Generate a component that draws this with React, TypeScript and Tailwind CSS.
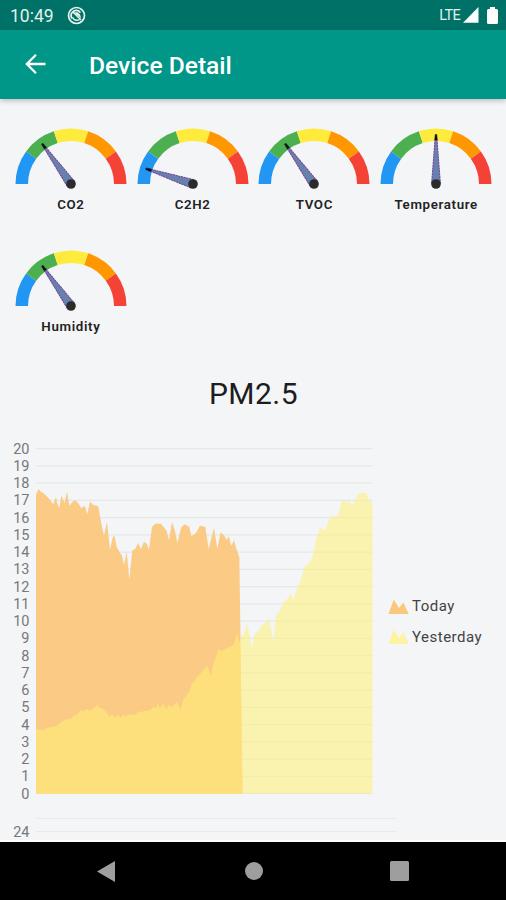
type Point = [number, number];

const STEP = 17.25;

// Chart points in thirds of a pixel; the baseline sits at y = 940.
const TODAY: Point[] = [
  [108, 42], [116, 26], [122, 34], [130, 38], [140, 48], [150, 58], [160, 72], [168, 50], [172, 70],
  [178, 84], [184, 46], [194, 68], [201, 34], [208, 76], [218, 64], [226, 60], [236, 70], [244, 84],
  [254, 76], [262, 102], [270, 64], [280, 74], [295, 78], [304, 130], [312, 166], [321, 126], [330, 208],
  [338, 172], [343, 164], [350, 200], [358, 214], [366, 226], [372, 254], [380, 214], [388, 298],
  [397, 210], [406, 206], [414, 188], [423, 206], [432, 184], [440, 190], [447, 208], [456, 140],
  [466, 130], [482, 130], [494, 144], [500, 152], [507, 180], [516, 124], [525, 152], [532, 188],
  [544, 140], [554, 132], [568, 140], [574, 168], [588, 158], [600, 136], [616, 140], [626, 206],
  [642, 142], [652, 206], [662, 156], [674, 168], [680, 180], [686, 168], [694, 196], [702, 180],
  [710, 208], [718, 230], [728, 940],
];

const YESTERDAY: Point[] = [
  [108, 748], [130, 748], [150, 740], [168, 738], [185, 724], [200, 716], [212, 716], [222, 704],
  [232, 704], [240, 690], [250, 692], [262, 686], [270, 692], [282, 682], [290, 674], [300, 682],
  [310, 686], [322, 700], [330, 710], [336, 702], [346, 710], [354, 704], [362, 712], [370, 702],
  [378, 708], [390, 700], [404, 704], [414, 696], [436, 692], [450, 690], [462, 678], [467, 684],
  [474, 670], [480, 684], [490, 670], [498, 686], [508, 672], [516, 682], [530, 664], [542, 686],
  [550, 658], [558, 648], [566, 636], [576, 610], [590, 592], [600, 580], [614, 564], [622, 556],
  [632, 586], [642, 544], [656, 506], [664, 512], [682, 502], [700, 494], [712, 460], [718, 486],
  [724, 468], [732, 462], [740, 430], [746, 450], [755, 505], [764, 460], [776, 452], [786, 434],
  [798, 426], [806, 416], [812, 440], [820, 486], [828, 404], [840, 392], [850, 366], [862, 356],
  [872, 338], [880, 360], [890, 326], [902, 300], [914, 258], [926, 250], [938, 228], [948, 178],
  [960, 142], [974, 152], [986, 120], [996, 108], [1014, 106], [1026, 60], [1040, 66], [1048, 62],
  [1058, 74], [1066, 60], [1076, 38], [1100, 38], [1106, 62], [1112, 52], [1117, 76], [1117, 940],
];

const area = (points: Point[]) =>
  `M108 940L${points.map(([x, y]) => `${x} ${y}`).join("L")}Z`;

const SEGMENTS = ["#2196f3", "#4caf50", "#ffeb3b", "#ff9800", "#f44336"];

function segmentPath(i: number) {
  const at = (deg: number, r: number) => {
    const a = (deg * Math.PI) / 180;
    return `${(60 - r * Math.cos(a)).toFixed(2)} ${(60 - r * Math.sin(a)).toFixed(2)}`;
  };
  return `M${at(i * 36, 55.5)}A55.5 55.5 0 0 1 ${at(i * 36 + 36, 55.5)}L${at(i * 36 + 36, 43)}A43 43 0 0 0 ${at(i * 36, 43)}Z`;
}

function Gauge({ label, angle }: { label: string; angle: number }) {
  return (
    <div className="flex h-[121.5px] flex-col items-center">
      <svg className="shrink-0" width="120" height="66" viewBox="0 0 120 66">
        {SEGMENTS.map((c, i) => (
          <path key={c} d={segmentPath(i)} fill={c} />
        ))}
        <g transform={`rotate(${angle - 90} 60 60)`}>
          <path d="M55.6 59.5L59 15.5H61L64.4 59.5Z" fill="#6482ab" />
          <path d="M55.6 59.5L59 15.5M61 15.5L64.4 59.5" stroke="#803d9c" strokeWidth="1" fill="none" strokeDasharray="2.2 .6" />
          <path d="M58.7 16L59.2 10.5H60.8L61.3 16Z" fill="#111" stroke="#111" strokeWidth=".5" />
        </g>
        <circle cx="60" cy="60" r="4.8" fill="#2b2b2b" />
      </svg>
      <span className="mt-[6.4px] text-[13.3px] leading-[18px] font-semibold tracking-[0.65px] text-[#222]">{label}</span>
    </div>
  );
}

function LegendItem({ label, color }: { label: string; color: string }) {
  return (
    <div className="flex h-[30.5px] items-center gap-[3px]">
      <svg width="21" height="15" viewBox="0 0 21 15">
        <path d="M0.5 15L5.8 0.5L11 9L15.5 3.5L20.5 15Z" fill={color} />
      </svg>
      <span className="text-[15px] tracking-[0.5px] text-[#424346]">{label}</span>
    </div>
  );
}

export default function App() {
  return (
    <div className="flex h-[900px] w-[506px] flex-col overflow-hidden bg-[#f4f5f7] font-['Roboto',sans-serif]">
      <div className="flex h-[30px] shrink-0 items-center bg-[#007166] pr-2 pl-[10px] text-white">
        <span className="mt-[2px] text-[17.5px] text-[#e2f0ee]">10:49</span>
        <svg className="ml-[13px]" width="19" height="19" viewBox="0 0 19 19" fill="none" stroke="#e9f4f2">
          <circle cx="9.5" cy="9.5" r="8" strokeWidth="1.7" />
          <path d="M5.2 12.6A5 5 0 0 1 5.4 6.2A5 5 0 0 1 13.4 6.6" strokeWidth="1.7" />
          <path d="M6.2 6.3L14 14" strokeWidth="1.4" />
          <path d="M7.6 6.8C10 5.6 13.4 7.4 13.5 11.8Z" fill="#e9f4f2" strokeWidth=".6" />
          <path d="M5.5 11.2C7 14.4 10 14.8 12.6 13.6" strokeWidth="1.4" />
        </svg>
        <span className="mt-[1px] ml-auto text-[14.5px] tracking-[-0.7px] text-[#e2f0ee]">LTE</span>
        <svg className="ml-[3px]" width="16" height="16" viewBox="0 0 16 16">
          <path d="M0 15.7L15.5 0V15.7Z" fill="#fff" />
        </svg>
        <svg className="ml-[8px]" width="11" height="17" viewBox="0 0 11 17">
          <path d="M3 0H8V2H9.5Q11 2 11 3.5V15.5Q11 17 9.5 17H1.5Q0 17 0 15.5V3.5Q0 2 1.5 2H3Z" fill="#fff" />
        </svg>
      </div>

      <header className="z-10 flex h-[68.5px] shrink-0 items-center bg-[#009688] pl-[25px] shadow-[0_2px_5px_rgba(0,0,0,0.22)]">
        <svg width="21" height="20" viewBox="0 0 21 20" fill="none" stroke="#fff" strokeWidth="2.3">
          <path d="M20.5 10H2M11 0.8L1.8 10L11 19.2" />
        </svg>
        <h1 className="mt-[4px] ml-[43px] text-[24.6px] font-medium text-white">Device Detail</h1>
      </header>

      <main className="flex min-h-0 flex-1 flex-col overflow-hidden border-b-2 border-white">
        <section className="grid shrink-0 grid-cols-4 pt-[25.5px] pr-[9px] pl-[10px]">
          <Gauge label="CO2" angle={54.4} />
          <Gauge label="C2H2" angle={18} />
          <Gauge label="TVOC" angle={54.4} />
          <Gauge label="Temperature" angle={90} />
          <Gauge label="Humidity" angle={54.4} />
        </section>

        <h2 className="mt-[7px] shrink-0 pl-[1px] text-center text-[30px] leading-[40px] tracking-[0.5px] text-[#1d1d1f]">PM2.5</h2>

        <section className="mt-[26.5px] flex shrink-0">
          <div className="flex w-[29.5px] flex-col text-right text-[14.5px] text-[#77787b]">
            {Array.from({ length: 21 }, (_, i) => (
              <span key={i} className="h-[17.25px] leading-[17.25px]">{20 - i}</span>
            ))}
          </div>
          <svg className="mt-[7px] ml-[6.5px]" width="337" height="346" viewBox="108 -97 1011 1038">
            {Array.from({ length: 21 }, (_, i) => (
              <path key={i} d={`M108 ${940 - i * STEP * 3}H1117`} stroke="#e6e7e9" strokeWidth="4" />
            ))}
            <path d={area(TODAY)} fill="#fbc67b" fillOpacity="0.93" />
            <path d={area(YESTERDAY)} fill="#fff176" fillOpacity="0.55" />
          </svg>
          <div className="ml-[15px] flex flex-col justify-center">
            <LegendItem label="Today" color="#fac77c" />
            <LegendItem label="Yesterday" color="#fdf3a0" />
          </div>
        </section>

        <section className="mt-[14.5px] flex shrink-0">
          <span className="mt-[6.5px] w-[29.5px] text-right text-[14.5px] leading-[17px] text-[#77787b]">24</span>
          <div className="mt-[1px] ml-[6.5px] h-[14px] w-[361px] border-y border-[#e8e9eb]" />
        </section>
      </main>

      <nav className="flex h-[58px] shrink-0 items-center bg-black pl-[97px]">
        <svg width="18" height="21" viewBox="0 0 18 21">
          <path d="M0 10.5L18 0V21Z" fill="#9e9e9e" />
        </svg>
        <div className="ml-[129.5px] size-[18.5px] rounded-full bg-[#9e9e9e]" />
        <div className="ml-[126.5px] size-[19.5px] rounded-[1.5px] bg-[#9e9e9e]" />
      </nav>
    </div>
  );
}
